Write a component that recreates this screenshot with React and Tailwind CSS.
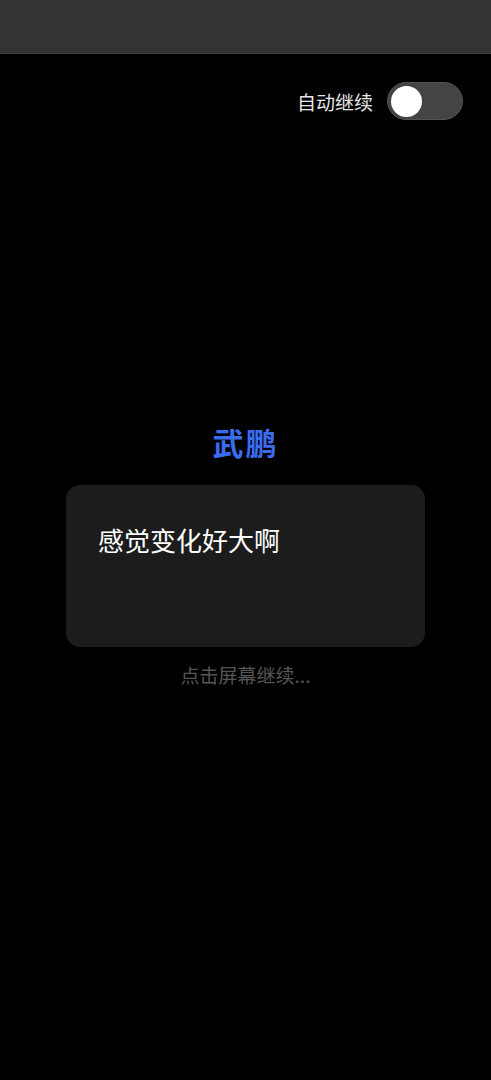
import React, { useState } from 'react';

const font = { fontFamily: '"Noto Sans CJK SC", "Noto Sans", sans-serif' };

const App = () => {
  const [auto, setAuto] = useState(false);

  return (
    <div className="min-h-screen w-full bg-black flex flex-col" style={font}>
      {/* Top bar */}
      <div className="h-[54px] bg-[#333333] border-b border-[#3d3d3d]"></div>

      {/* Auto continue toggle */}
      <div className="flex justify-end items-center gap-[14px] pr-[28px] mt-[28px]">
        <span className="text-[19px] text-[#e6e6e6] leading-none">自动继续</span>
        <button
          type="button"
          onClick={() => setAuto(!auto)}
          className="w-[76px] h-[38px] rounded-full bg-[#444444] border border-[#525252] flex items-center px-[3px]"
        >
          <span className="w-[31px] h-[31px] rounded-full bg-white block"></span>
        </button>
      </div>

      {/* Dialogue */}
      <div className="flex flex-col items-center mt-[306px]">
        <h2 className="text-[31px] font-bold text-[#3b6cf0] leading-none tracking-[2px]">武鹏</h2>
        <div className="mt-[28px] w-[359px] h-[162px] rounded-[14px] bg-[#1c1c1c] px-[32px] pt-[42px]">
          <p className="text-[26px] text-white leading-none">感觉变化好大啊</p>
        </div>
        <p className="mt-[18px] text-[19px] text-[#555555] leading-none">点击屏幕继续...</p>
      </div>
    </div>
  );
};

export default App;
